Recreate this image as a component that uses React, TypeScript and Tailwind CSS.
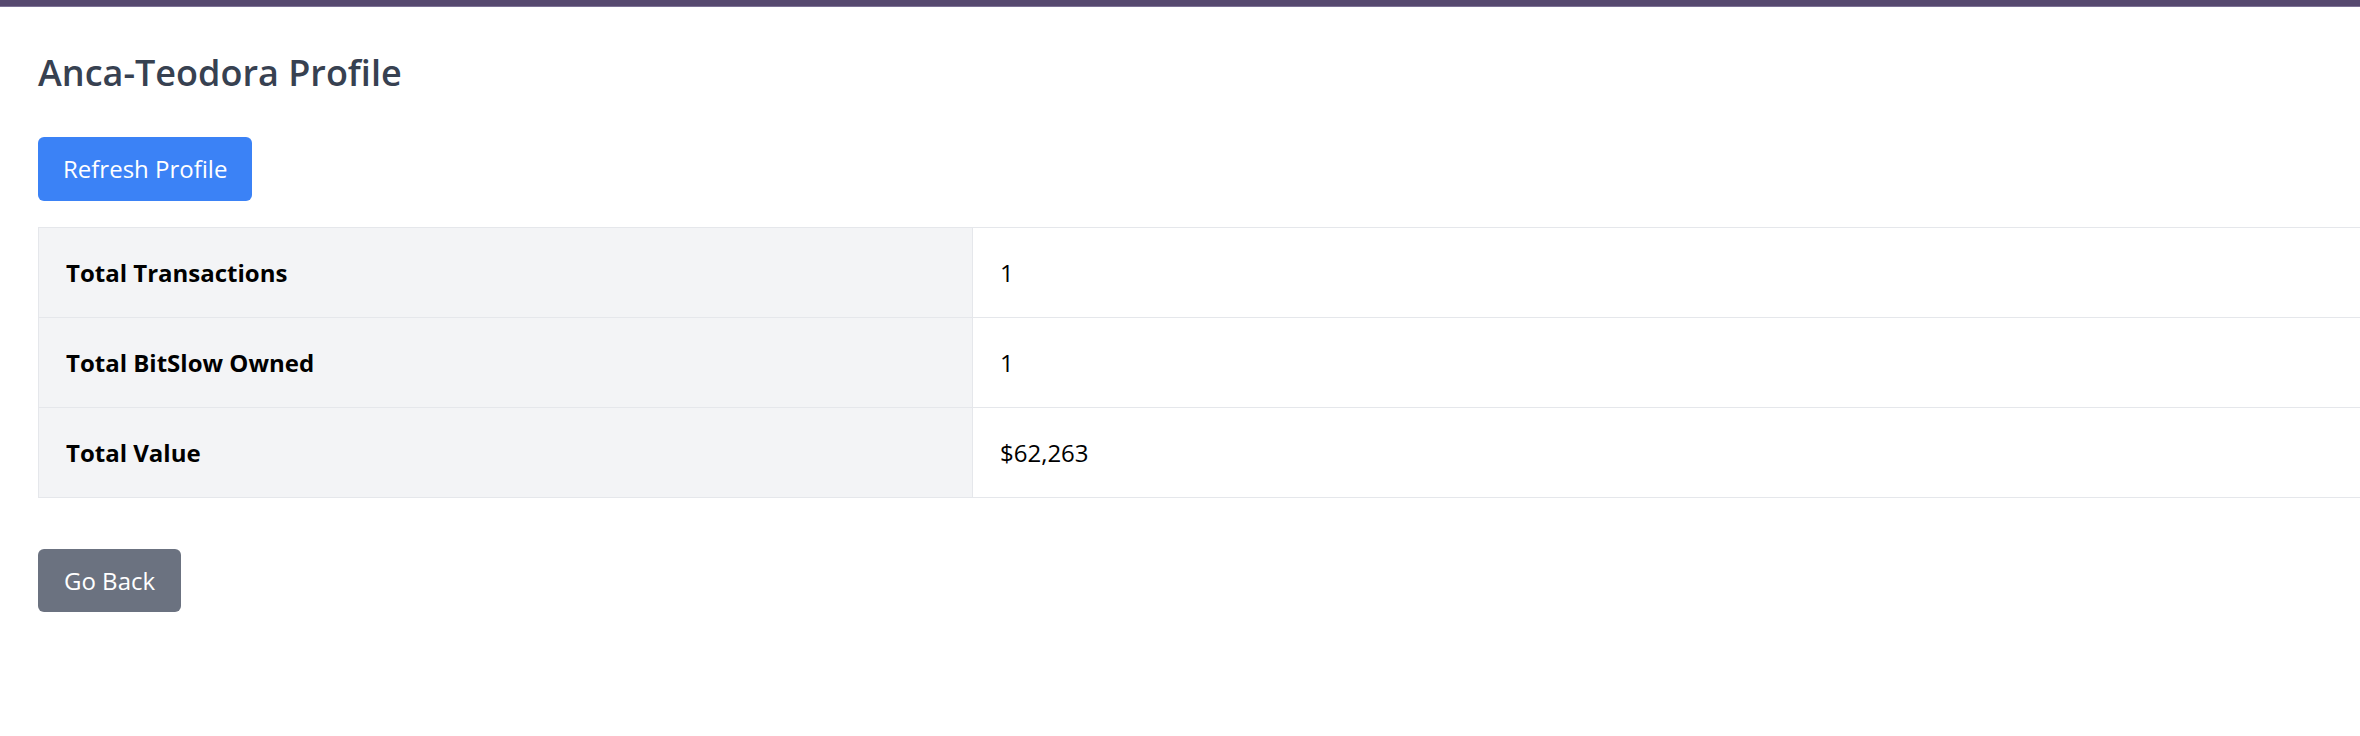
import React from "react";

const rows = [
  { label: "Total Transactions", value: "1" },
  { label: "Total BitSlow Owned", value: "1" },
  { label: "Total Value", value: "$62,263" },
];

export default function App() {
  return (
    <div className="min-h-screen overflow-hidden bg-white font-['Open_Sans','Noto_Sans',sans-serif]">
      <div className="h-[7px] bg-[#56496f] border-b border-[#7d7296]" />
      <div className="pl-[38px] pt-[39px]">
        <h1 className="text-[36px] leading-[54px] font-semibold text-[#374151]">
          Anca-Teodora Profile
        </h1>

        <button className="mt-[37px] h-[64px] px-[25px] rounded-[6px] bg-[#3b82f6] text-[24px] text-white">
          Refresh Profile
        </button>

        <table className="mt-[26px] w-[2800px] border-collapse text-[24px] text-black">
          <tbody>
            {rows.map((row) => (
              <tr key={row.label} className="h-[90px]">
                <td className="w-[934px] border border-[#e5e7eb] bg-[#f3f4f6] pl-[27px] font-bold">
                  {row.label}
                </td>
                <td className="border border-[#e5e7eb] pl-[27px]">{row.value}</td>
              </tr>
            ))}
          </tbody>
        </table>

        <button className="mt-[51px] h-[63px] px-[26px] rounded-[6px] bg-[#6b7280] text-[24px] text-white">
          Go Back
        </button>
      </div>
    </div>
  );
}
